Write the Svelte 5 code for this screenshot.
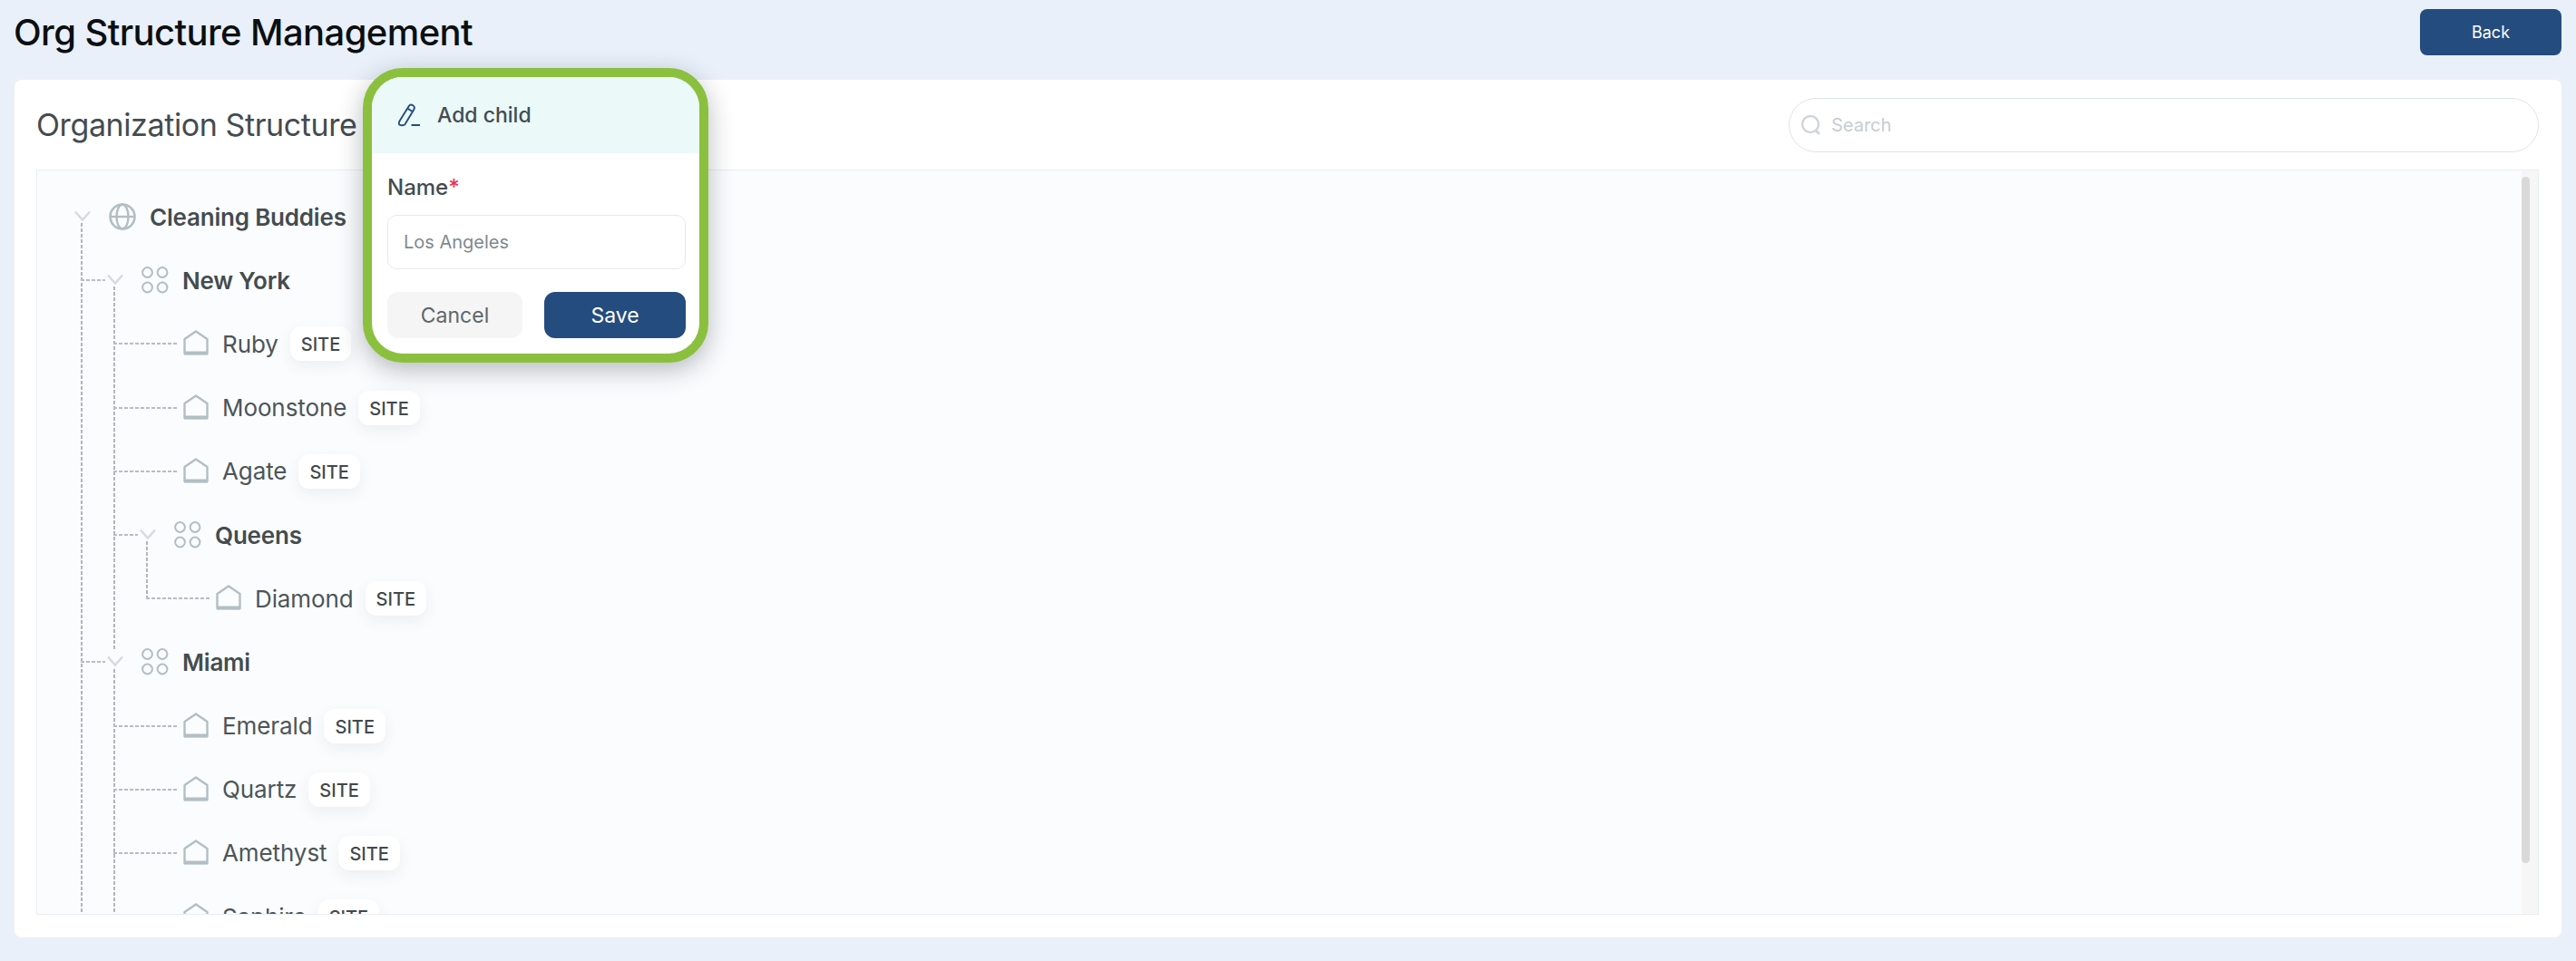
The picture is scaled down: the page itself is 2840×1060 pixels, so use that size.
<script>
  const newYork = ['Ruby', 'Moonstone', 'Agate'];
  const miami = ['Emerald', 'Quartz', 'Amethyst', 'Saphire'];
</script>

{#snippet chevron()}
  <svg class="chevron" width="18" height="12" viewBox="0 0 18 12" fill="none" aria-hidden="true">
    <path d="M1 1.5L9 10.5L17 1.5" stroke="#d6dbde" stroke-width="2.6" />
  </svg>
{/snippet}

{#snippet cluster()}
  <svg class="node-icon" width="30" height="30" viewBox="0 0 30 30" fill="none" aria-hidden="true">
    <circle cx="6.5" cy="6.5" r="5.4" stroke="#b1bfc4" stroke-width="2" />
    <circle cx="23" cy="6.5" r="5.4" stroke="#b1bfc4" stroke-width="2" />
    <circle cx="6.5" cy="23" r="5.4" stroke="#b1bfc4" stroke-width="2" />
    <circle cx="23" cy="23" r="5.4" stroke="#b1bfc4" stroke-width="2" />
  </svg>
{/snippet}

{#snippet leaf(name)}
  <li class="leaf">
    <svg class="node-icon house" width="28" height="28" viewBox="0 0 28 28" fill="none" aria-hidden="true">
      <path d="M1.5 10L14 1.5L26.5 10V26H1.5Z" stroke="#b1bfc4" stroke-width="2.4" stroke-linejoin="round" />
      <path d="M1 25.5H27" stroke="#b1bfc4" stroke-width="4" />
    </svg>
    <span class="leaf-name">{name}</span>
    <span class="badge">SITE</span>
  </li>
{/snippet}

<div class="page">
  <header class="top">
    <h1>Org Structure Management</h1>
    <button class="back">Back</button>
  </header>

  <section class="card">
    <div class="card-head">
      <h2>Organization Structure</h2>
      <div class="search">
        <svg width="24" height="24" viewBox="0 0 24 24" fill="none" aria-hidden="true">
          <circle cx="11" cy="11" r="9" stroke="#cfd5d9" stroke-width="2.4" />
          <path d="M18 19L20 21" stroke="#cfd5d9" stroke-width="3" stroke-linecap="round" />
        </svg>
        <span>Search</span>
      </div>
    </div>

    <div class="tree-wrap">
      <div class="tree">
        <div class="root row">
          {@render chevron()}
          <svg class="node-icon" width="30" height="30" viewBox="0 0 30 30" fill="none" aria-hidden="true">
            <circle cx="15" cy="15" r="13.5" stroke="#b1bfc4" stroke-width="2.6" />
            <ellipse cx="15" cy="15" rx="6.5" ry="13.5" stroke="#b1bfc4" stroke-width="2.4" />
            <path d="M2 15H28" stroke="#b1bfc4" stroke-width="2.4" />
          </svg>
          <span class="group-name">Cleaning Buddies</span>
        </div>
        <ul class="children">
          <li class="group">
            <div class="row">
              {@render chevron()}
              {@render cluster()}
              <span class="group-name">New York</span>
            </div>
            <ul class="children extend">
              {#each newYork as name}
                {@render leaf(name)}
              {/each}
              <li class="group">
                <div class="row">
                  {@render chevron()}
                  {@render cluster()}
                  <span class="group-name">Queens</span>
                </div>
                <ul class="children stop">
                  {@render leaf('Diamond')}
                </ul>
              </li>
            </ul>
          </li>
          <li class="group">
            <div class="row">
              {@render chevron()}
              {@render cluster()}
              <span class="group-name">Miami</span>
            </div>
            <ul class="children">
              {#each miami as name}
                {@render leaf(name)}
              {/each}
            </ul>
          </li>
        </ul>
      </div>
      <div class="scrollbar"><div class="thumb"></div></div>
    </div>
  </section>

  <div class="popover">
    <div class="pop-head">
      <svg width="26" height="26" viewBox="0 0 26 26" fill="none" aria-hidden="true">
        <path d="M2.5 19.5L12.5 3.5C13.6 1.8 15.6 1.2 17.2 2.2C18.8 3.2 19.2 5.2 18.2 6.9L8.4 23.2C7.6 24.3 3.6 24.6 2.2 23.6C1.6 23.1 1.9 20.6 2.5 19.5Z" stroke="#234c80" stroke-width="1.9" />
        <path d="M11.2 5.6L16.8 9" stroke="#234c80" stroke-width="1.9" />
        <path d="M15.5 24H25" stroke="#234c80" stroke-width="1.9" />
      </svg>
      <span>Add child</span>
    </div>
    <div class="pop-body">
      <div class="label">Name<span class="req">*</span></div>
      <div class="input">Los Angeles</div>
      <div class="actions">
        <button class="cancel">Cancel</button>
        <button class="save">Save</button>
      </div>
    </div>
  </div>
</div>

<style>
  :global(body) {
    background: #e9f0fa;
  }
  .page {
    position: relative;
    width: 2840px;
    height: 1060px;
    padding: 0 16px;
    box-sizing: border-box;
    font-family: Inter, "Liberation Sans", sans-serif;
    overflow: hidden;
  }
  .top {
    display: flex;
    justify-content: space-between;
    align-items: flex-start;
    height: 88px;
  }
  h1 {
    margin: 0 0 0 -1px;
    padding-top: 9px;
    font-size: 40px;
    line-height: 54px;
    font-weight: 500;
    letter-spacing: -0.6px;
    color: #0b0f12;
  }
  .back {
    margin-top: 10px;
    width: 156px;
    height: 51px;
    border: none;
    border-radius: 8px;
    background: #244c7e;
    color: #fff;
    font: 400 18px Inter, sans-serif;
  }
  .card {
    height: 946px;
    background: #fff;
    border-radius: 8px;
    padding: 0 25px 0 24px;
    box-sizing: border-box;
  }
  .card-head {
    display: flex;
    justify-content: space-between;
    align-items: center;
    height: 99px;
  }
  h2 {
    margin: 0;
    font-size: 34px;
    font-weight: 400;
    letter-spacing: -0.4px;
    color: #444c4f;
  }
  .search {
    display: flex;
    align-items: center;
    gap: 10px;
    width: 827px;
    height: 60px;
    box-sizing: border-box;
    padding-left: 12px;
    border: 1.5px solid #dfe4e6;
    border-radius: 30px;
    color: #c6cdd2;
    font-size: 20px;
  }
  .tree-wrap {
    position: relative;
    height: 822px;
    box-sizing: border-box;
    border: 1.5px solid #e9eef5;
    background: #fbfcfe;
    overflow: hidden;
  }
  .tree {
    height: 100%;
    box-sizing: border-box;
    padding: 16px 0 0 41px;
    overflow: hidden;
  }
  .scrollbar {
    position: absolute;
    top: 0;
    right: 0;
    bottom: 0;
    width: 18px;
    background: #f6f6f6;
  }
  .thumb {
    margin-top: 7px;
    width: 9px;
    height: 757px;
    border-radius: 5px;
    background: #d9d9d9;
  }
  ul {
    list-style: none;
    margin: 0;
    padding: 0;
  }
  .row,
  .leaf {
    display: flex;
    align-items: center;
    height: 70.2px;
  }
  .chevron {
    flex: none;
    width: 18px;
    margin-right: 20px;
    margin-top: -2px;
  }
  .node-icon {
    flex: none;
  }
  .house {
    margin-top: -2px;
  }
  .group-name {
    margin-left: 15px;
    font-size: 26px;
    font-weight: 600;
    letter-spacing: -0.2px;
    color: #444c4f;
  }
  .children {
    position: relative;
    padding-left: 36px;
  }
  .children::before {
    content: "";
    position: absolute;
    left: 7px;
    top: -28px;
    bottom: 0;
    width: 2px;
    background: repeating-linear-gradient(to bottom, #aeb7bb 0 4px, transparent 4px 6px);
  }
  .children.extend::before {
    bottom: -22px;
  }
  .children.stop::before {
    bottom: 34px;
  }
  .group,
  .leaf {
    position: relative;
  }
  .group::before,
  .leaf::before {
    content: "";
    position: absolute;
    left: -29px;
    top: 34px;
    height: 2px;
    background: repeating-linear-gradient(to right, #b6bec2 0 4px, transparent 4px 6px);
  }
  .group::before {
    width: 27px;
  }
  .leaf::before {
    width: 71px;
  }
  .leaf {
    padding-left: 48px;
  }
  .leaf-name {
    margin-left: 15px;
    font-size: 26px;
    font-weight: 400;
    letter-spacing: -0.1px;
    color: #4d5558;
  }
  .badge {
    margin-left: 13px;
    padding: 0 12px;
    height: 38px;
    line-height: 40px;
    border-radius: 12px;
    background: #fff;
    box-shadow: 0 6px 16px rgba(40, 50, 60, 0.07);
    font-size: 20px;
    font-weight: 500;
    color: #41494c;
  }
  .popover {
    position: absolute;
    left: 400px;
    top: 75px;
    width: 381px;
    height: 325px;
    box-sizing: border-box;
    border: 10px solid #8bc03f;
    border-radius: 44px;
    background: #fff;
    box-shadow: 0 8px 28px rgba(20, 30, 40, 0.3);
    overflow: hidden;
  }
  .pop-head {
    display: flex;
    align-items: center;
    gap: 18px;
    height: 84px;
    padding-left: 28px;
    box-sizing: border-box;
    background: #ecf9f9;
    font-size: 23px;
    font-weight: 500;
    color: #444c4f;
  }
  .pop-body {
    padding: 18px 15px 0 17px;
  }
  .label {
    font-size: 24px;
    font-weight: 500;
    line-height: 40px;
    color: #444c4f;
  }
  .req {
    color: #e8345a;
  }
  .input {
    display: flex;
    align-items: center;
    margin-top: 10px;
    height: 60px;
    box-sizing: border-box;
    padding-left: 17px;
    border: 1.5px solid #e6e9eb;
    border-radius: 10px;
    font-size: 20px;
    color: #7f898e;
  }
  .actions {
    display: flex;
    justify-content: space-between;
    margin-top: 25px;
  }
  .actions button {
    height: 51px;
    border: none;
    border-radius: 12px;
    font: 400 23px Inter, sans-serif;
  }
  .cancel {
    width: 149px;
    background: #f5f5f5;
    color: #5e666a;
  }
  .save {
    width: 156px;
    background: #244c7e;
    color: #fff;
  }
</style>
